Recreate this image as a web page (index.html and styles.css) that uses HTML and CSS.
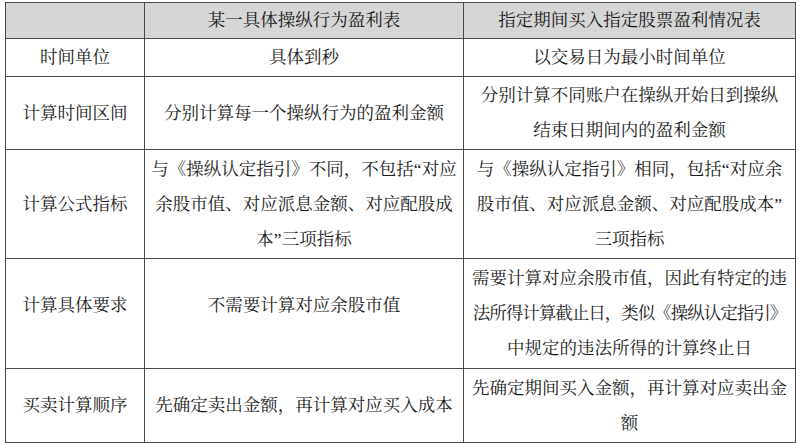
FILE: index.html
```html
<!DOCTYPE html>
<html lang="zh-CN">
<head>
<meta charset="utf-8">
<title>盈利表对比</title>
<link rel="stylesheet" href="styles.css">
</head>
<body>
<table class="cmp">
  <colgroup>
    <col class="c1">
    <col class="c2">
    <col class="c3">
  </colgroup>
  <thead>
    <tr class="r-head">
      <th></th>
      <th>某一具体操纵行为盈利表</th>
      <th>指定期间买入指定股票盈利情况表</th>
    </tr>
  </thead>
  <tbody>
    <tr class="r1">
      <td>时间单位</td>
      <td>具体到秒</td>
      <td>以交易日为最小时间单位</td>
    </tr>
    <tr class="r2">
      <td>计算时间区间</td>
      <td>分别计算每一个操纵行为的盈利金额</td>
      <td>分别计算不同账户在操纵开始日到操纵<br>结束日期间内的盈利金额</td>
    </tr>
    <tr class="r3">
      <td>计算公式指标</td>
      <td>与《操纵认定指引》不同，不包括“对应<br>余股市值、对应派息金额、对应配股成<br>本”三项指标</td>
      <td>与《操纵认定指引》相同，包括“对应余<br>股市值、对应派息金额、对应配股成本”<br>三项指标</td>
    </tr>
    <tr class="r4">
      <td class="up">计算具体要求</td>
      <td class="up">不需要计算对应余股市值</td>
      <td>需要计算对应余股市值，因此有特定的违<br><span class="tight">法所得计算截止日，类似《操纵认定指引》</span><br>中规定的违法所得的计算终止日</td>
    </tr>
    <tr class="r5">
      <td>买卖计算顺序</td>
      <td>先确定卖出金额，再计算对应买入成本</td>
      <td>先确定期间买入金额，再计算对应卖出金<br>额</td>
    </tr>
  </tbody>
</table>
</body>
</html>
```

FILE: styles.css
```css
html, body {
  margin: 0;
  padding: 0;
  background: #ffffff;
}

body {
  padding: 2px 0 0 5px;
  font-family: "Liberation Serif", "Noto Serif CJK SC", "Noto Sans CJK SC", serif;
  color: #1a1a1a;
}

.cmp {
  border-collapse: collapse;
  table-layout: fixed;
  width: 790px;
  font-size: 17.5px;
  letter-spacing: 0;
  line-height: 35px;
}

.c1 { width: 139px; }
.c2 { width: 319px; }
.c3 { width: 332px; }

.cmp th,
.cmp td {
  border: 1px solid #4a4a4a;
  padding: 0 2px;
  text-align: center;
  vertical-align: middle;
  white-space: nowrap;
  font-weight: normal;
  overflow: visible;
}

.cmp th {
  background: #d6d6d6;
  color: #161616;
}

.r-head { height: 36px; }
.r1 { height: 38px; }
.r2 { height: 73px; }
.r3 { height: 109px; }
.r4 { height: 110px; }
.r5 { height: 74px; }

.cmp td.up {
  padding-bottom: 16px;
}

.tight {
  letter-spacing: -1px;
}
```
